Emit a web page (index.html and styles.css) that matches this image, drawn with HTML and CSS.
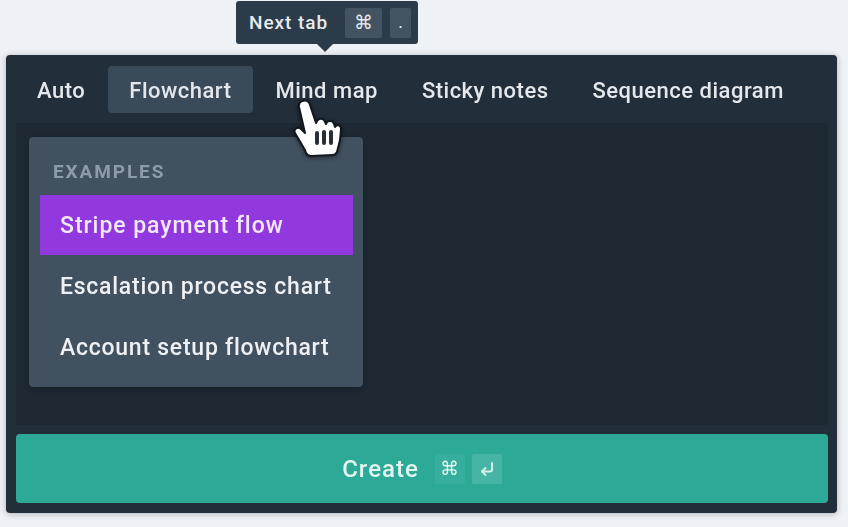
FILE: index.html
```html
<!DOCTYPE html>
<html lang="en">
<head>
    <meta charset="UTF-8">
    <title>Create diagram</title>
    <link rel="stylesheet" href="styles.css">
</head>
<body>

<div class="page">
    <!-- Tooltip over the tabs -->
    <div class="tooltip">
        <span>Next tab</span>
        <span class="key key-wide">⌘</span>
        <span class="key">.</span>
    </div>

    <div class="panel">
        <div class="tabs">
            <div class="tab">Auto</div>
            <div class="tab tab-active">Flowchart</div>
            <div class="tab">Mind map</div>
            <div class="tab">Sticky notes</div>
            <div class="tab">Sequence diagram</div>
        </div>

        <div class="editor">
            <div class="menu">
                <div class="menu-title">EXAMPLES</div>
                <div class="menu-item menu-item-active">Stripe payment flow</div>
                <div class="menu-item">Escalation process chart</div>
                <div class="menu-item">Account setup flowchart</div>
            </div>
        </div>

        <div class="create">
            <span class="create-label">Create</span>
            <span class="create-key">⌘</span>
            <span class="create-key create-key-light">
                <svg width="18" height="18" viewBox="0 0 18 18" fill="none" stroke="#d5efe9" stroke-width="2" stroke-linecap="round" stroke-linejoin="round">
                    <path d="M14 3v6.5a2 2 0 0 1-2 2H4"/>
                    <path d="M7.5 8 4 11.5 7.5 15"/>
                </svg>
            </span>
        </div>
    </div>

    <!-- Hand cursor -->
    <svg class="cursor" width="52" height="62" viewBox="0 0 52 62">
        <path d="M13 51 3 34c-2-4 3-7 6-4l4 4L7 8c-1-7 9-9 11-2l6 18 1-2c2-3 7-3 8 1l1 2c1-4 7-4 8 0l1 3c2-3 6-2 6 2l-1 11-3 12c-1 2-2 3-4 3l-22 1c-2 0-4-1-5-3z" fill="#fff" stroke="#111820" stroke-width="2" stroke-linejoin="round"/>
        <path d="M25 34v10M32 33v11M39 33v11" stroke="#2a2f36" stroke-width="4" stroke-linecap="round"/>
    </svg>
</div>

</body>
</html>
```

FILE: styles.css
```css
/* Global styling */
html, body {
    margin: 0;
    padding: 0;
    height: 100%;
    overflow: hidden;
}

body {
    font-family: 'Roboto', 'Liberation Sans', sans-serif;
    background-color: #eef1f5;
}

.page {
    position: relative;
    box-sizing: border-box;
    width: 848px;
    height: 527px;
    padding: 55px 11px 14px 6px;
    filter: blur(0.7px);
}

/* Tooltip */
.tooltip {
    position: absolute;
    left: 236px;
    top: 1px;
    width: 182px;
    height: 43px;
    box-sizing: border-box;
    padding: 0 0 0 13px;
    display: flex;
    align-items: center;
    background-color: #2c3b49;
    border-radius: 3px;
    color: #e6eaed;
    font-size: 19px;
    font-weight: 500;
    letter-spacing: 0.95px;
    white-space: nowrap;
}

.tooltip::after {
    content: "";
    position: absolute;
    left: 81px;
    top: 43px;
    border-left: 8px solid transparent;
    border-right: 8px solid transparent;
    border-top: 8px solid #2c3b49;
}

.key {
    width: 21px;
    height: 30px;
    margin-left: 8px;
    display: flex;
    align-items: center;
    justify-content: center;
    background-color: #435361;
    border-radius: 2px;
    font-size: 15px;
    letter-spacing: 0;
}

.key-wide {
    width: 37px;
    margin-left: 17px;
    font-size: 19px;
}

/* Main panel */
.panel {
    box-sizing: border-box;
    height: 458px;
    padding: 11px 9px 10px 10px;
    display: flex;
    flex-direction: column;
    background-color: #222e3a;
    border-radius: 4px;
    box-shadow: 0 1px 6px rgba(30, 40, 50, 0.3);
}

.tabs {
    display: flex;
    gap: 2px;
    height: 47px;
    margin-bottom: 10px;
}

.tab {
    display: flex;
    align-items: center;
    padding: 1px 21px 0;
    border-radius: 4px;
    color: #e4e8ec;
    font-size: 22px;
    font-weight: 500;
    letter-spacing: 0.5px;
    white-space: nowrap;
}

.tab-active {
    background-color: #3a4a59;
}

.editor {
    flex: 1;
    padding: 14px 13px;
    background-color: #1e2933;
    margin-bottom: 9px;
}

/* Examples menu */
.menu {
    box-sizing: border-box;
    width: 334px;
    height: 250px;
    padding: 0 10px 0 11px;
    background-color: #415160;
    border-radius: 4px;
    box-shadow: 0 2px 6px rgba(0, 0, 0, 0.25);
}

.menu-title {
    height: 58px;
    padding: 23px 0 0 13px;
    box-sizing: border-box;
    color: #8f9ca8;
    font-size: 19px;
    font-weight: 700;
    letter-spacing: 1.9px;
    line-height: 23px;
}

.menu-item {
    height: 60px;
    margin-top: 1px;
    padding-left: 20px;
    display: flex;
    align-items: center;
    color: #eef0f3;
    font-size: 23px;
    font-weight: 500;
    letter-spacing: 0.75px;
    white-space: nowrap;
}

.menu-item-active {
    margin-top: 0;
    background-color: #9138de;
    color: #f2e8fb;
    letter-spacing: 0.95px;
}

/* Create button */
.create {
    height: 69px;
    display: flex;
    align-items: center;
    justify-content: center;
    gap: 7px;
    background-color: #2ca997;
    border-radius: 4px;
    color: #e4f5f1;
    font-size: 24px;
    font-weight: 500;
    letter-spacing: 1px;
}

.create-label {
    margin-right: 9px;
}

.create-key {
    width: 30px;
    height: 30px;
    display: flex;
    align-items: center;
    justify-content: center;
    background-color: #36ae9d;
    border-radius: 2px;
    font-size: 19px;
    letter-spacing: 0;
}

.create-key-light {
    background-color: #46b5a6;
}

/* Cursor sits on top of everything */
.cursor {
    position: absolute;
    left: 292px;
    top: 99px;
    filter: drop-shadow(0 1px 2px rgba(0, 0, 0, 0.5));
}
```
